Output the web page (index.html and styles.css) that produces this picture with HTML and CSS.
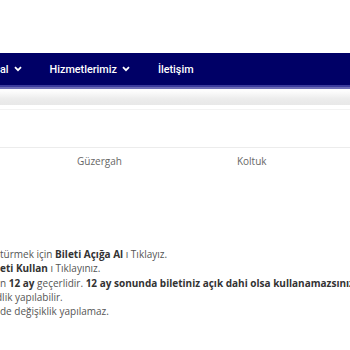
FILE: index.html
```html
<!DOCTYPE html>
<html lang="tr">
<head>
<meta charset="utf-8">
<link rel="stylesheet" href="styles.css">
</head>
<body>
<div class="top"></div>
<nav class="nav">
  <div class="nav-item">al <span class="chev"><svg width="8" height="6" viewBox="0 0 8 6"><path d="M1 1.2 L4 4.2 L7 1.2" fill="none" stroke="#fff" stroke-width="1.8"/></svg></span></div>
  <div class="nav-item">Hizmetlerimiz <span class="chev"><svg width="8" height="6" viewBox="0 0 8 6"><path d="M1 1.2 L4 4.2 L7 1.2" fill="none" stroke="#fff" stroke-width="1.8"/></svg></span></div>
  <div class="nav-item">İletişim</div>
</nav>
<div class="stripe1"></div>
<div class="stripe2"></div>
<div class="subbar"></div>
<div class="space"></div>
<div class="thead">
  <div class="th th1">Güzergah</div>
  <div class="th th2">Koltuk</div>
</div>
<div class="notes">
  <div class="line">türmek için <b>Bileti Açığa Al</b> ı Tıklayız.</div>
  <div class="line"><b>eti Kullan</b> ı Tıklayınız.</div>
  <div class="line">n <b>12 ay</b> geçerlidir. <b>12 ay sonunda biletiniz açık dahi olsa kullanamazsınız.</b></div>
  <div class="line l4">dlik yapılabilir.</div>
  <div class="line">de değişiklik yapılamaz.</div>
</div>
</body>
</html>
```
FILE: styles.css
```css
html, body { margin: 0; padding: 0; background: #fff; }
body { width: 350px; overflow: hidden; }
.top { height: 53px; }
.nav {
  height: 32px;
  background: #000066;
  display: flex;
  align-items: center;
  font-family: Roboto, "Liberation Sans", sans-serif;
  font-weight: 500;
  font-size: 10.8px;
  color: #fff;
  white-space: nowrap;
}
.nav-item { display: flex; align-items: center; gap: 5px; }
.nav-item:first-child { margin-right: 28px; }
.nav-item:nth-child(2) { margin-right: 28px; }
.chev { display: flex; align-items: center; }
.stripe1 { height: 2px; background: #3a3a9c; }
.stripe2 { height: 2px; background: #6c6cb6; }
.subbar { height: 16px; background: linear-gradient(#ffffff 0, #fbfbfb 3px, #ececec 10px, #e8e8e8 16px); }
.space { margin-top: 4px; height: 37px; border-top: 1px solid #f3f3f3; border-bottom: 1px solid #ececec; }
.thead {
  display: flex;
  height: 26px;
  align-items: center;
  font-family: "Open Sans", sans-serif;
  font-size: 10px;
  color: #666;
}
.th1 { margin-left: 77px; }
.th2 { margin-left: 115px; }
.notes {
  margin-top: 73px;
  font-family: "Open Sans", sans-serif;
  font-size: 10px;
  line-height: 14.3px;
  color: #555;
  white-space: nowrap;
}
.notes b { color: #333; font-weight: 700; }
.l4 { text-indent: -4px; }
```
